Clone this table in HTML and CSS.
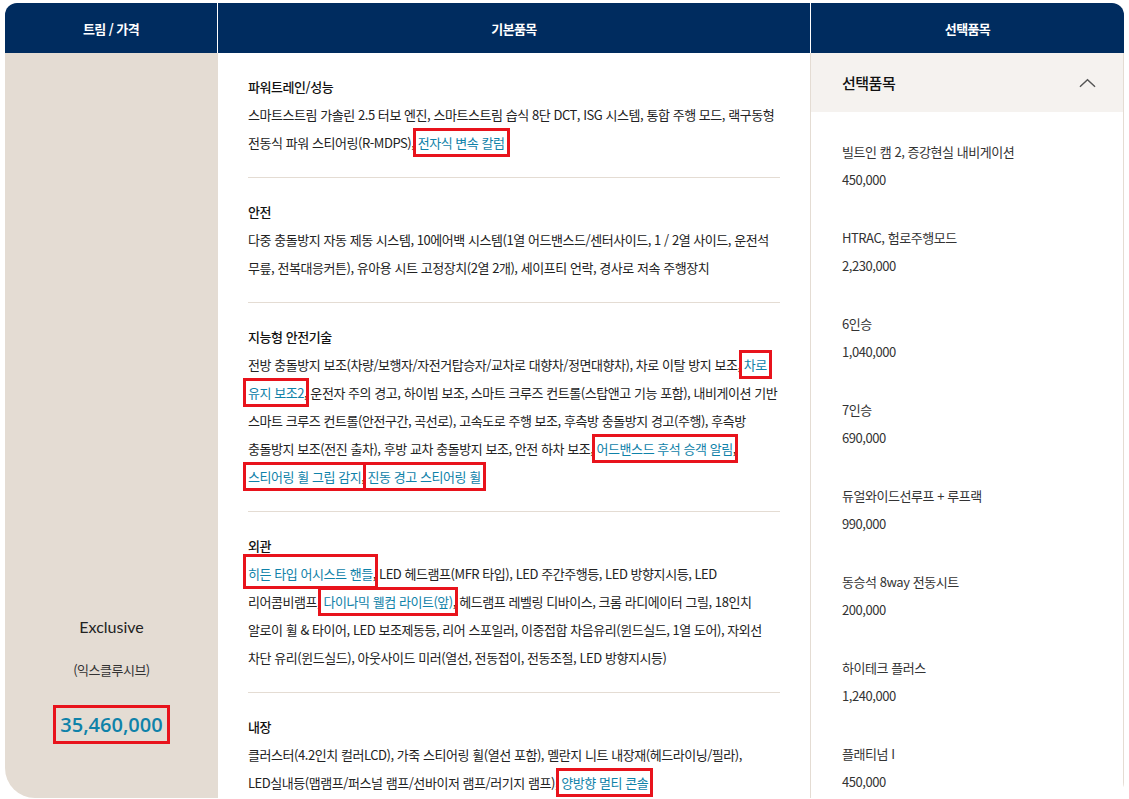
FILE: index.html
```html
<!DOCTYPE html>
<html lang="ko">
<head>
  <meta charset="UTF-8" />
  <meta name="viewport" content="width=device-width, initial-scale=1.0"/>
  <title>트림 / 가격</title>

  <link rel="stylesheet" href="styles.css">
</head>
<body>
  <div class="spec">
    <div class="spec-head">
      <div class="head-cell">트림 / 가격</div>
      <div class="head-cell">기본품목</div>
      <div class="head-cell">선택품목</div>
    </div>

    <div class="spec-body">
      <div class="trim">
        <p class="trim-name">Exclusive</p>
        <p class="trim-sub">(익스클루시브)</p>
        <p class="trim-price"><span class="mark">35,460,000</span></p>
      </div>

      <div class="basic">
        <section class="group">
          <h3 class="group-title">파워트레인/성능</h3>
          <p class="group-text">스마트스트림 가솔린 2.5 터보 엔진, 스마트스트림 습식 8단 DCT, ISG 시스템, 통합 주행 모드, 랙구동형 전동식 파워 스티어링(R-MDPS), <span class="link mark">전자식 변속 칼럼</span></p>
        </section>
        <section class="group">
          <h3 class="group-title">안전</h3>
          <p class="group-text">다중 충돌방지 자동 제동 시스템, 10에어백 시스템(1열 어드밴스드/센터사이드, 1 / 2열 사이드, 운전석 무릎, 전복대응커튼), 유아용 시트 고정장치(2열 2개), 세이프티 언락, 경사로 저속 주행장치</p>
        </section>
        <section class="group">
          <h3 class="group-title">지능형 안전기술</h3>
          <p class="group-text">전방 충돌방지 보조(차량/보행자/자전거탑승자/교차로 대향차/정면대향차), 차로 이탈 방지 보조, <span class="link mark">차로</span> <span class="link mark">유지 보조2</span>, 운전자 주의 경고, 하이빔 보조, 스마트 크루즈 컨트롤(스탑앤고 기능 포함), 내비게이션 기반 스마트 크루즈 컨트롤(안전구간, 곡선로), 고속도로 주행 보조, 후측방 충돌방지 경고(주행), 후측방 충돌방지 보조(전진 출차), 후방 교차 충돌방지 보조, 안전 하차 보조, <span class="link mark">어드밴스드 후석 승객 알림</span>, <span class="link mark">스티어링 휠 그립 감지</span>, <span class="link mark">진동 경고 스티어링 휠</span></p>
        </section>
        <section class="group">
          <h3 class="group-title">외관</h3>
          <p class="group-text"><span class="link mark mark-tall">히든 타입 어시스트 핸들</span>, LED 헤드램프(MFR 타입), LED 주간주행등, LED 방향지시등, LED 리어콤비램프, <span class="link mark">다이나믹 웰컴 라이트(앞)</span>, 헤드램프 레벨링 디바이스, 크롬 라디에이터 그릴, 18인치 알로이 휠 &amp; 타이어, LED 보조제동등, 리어 스포일러, 이중접합 차음유리(윈드실드, 1열 도어), 자외선 차단 유리(윈드실드), 아웃사이드 미러(열선, 전동접이, 전동조절, LED 방향지시등)</p>
        </section>
        <section class="group">
          <h3 class="group-title">내장</h3>
          <p class="group-text">클러스터(4.2인치 컬러LCD), 가죽 스티어링 휠(열선 포함), 멜란지 니트 내장재(헤드라이닝/필라), LED실내등(맵램프/퍼스널 램프/선바이저 램프/러기지 램프), <span class="link mark">양방향 멀티 콘솔</span></p>
        </section>
      </div>

      <div class="options">
        <div class="options-head">
          <span>선택품목</span>
          <svg class="chevron" width="18" height="10" viewBox="0 0 18 10">
            <path d="M1 9 L9 1.5 L17 9" fill="none" stroke="#555" stroke-width="1.5"/>
          </svg>
        </div>
        <ul class="option-list">
          <li class="option">
            <p>빌트인 캠 2, 증강현실 내비게이션</p>
            <p>450,000</p>
          </li>
          <li class="option">
            <p>HTRAC, 험로주행모드</p>
            <p>2,230,000</p>
          </li>
          <li class="option">
            <p>6인승</p>
            <p>1,040,000</p>
          </li>
          <li class="option">
            <p>7인승</p>
            <p>690,000</p>
          </li>
          <li class="option">
            <p>듀얼와이드선루프 + 루프랙</p>
            <p>990,000</p>
          </li>
          <li class="option">
            <p>동승석 8way 전동시트</p>
            <p>200,000</p>
          </li>
          <li class="option">
            <p>하이테크 플러스</p>
            <p>1,240,000</p>
          </li>
          <li class="option">
            <p>플래티넘 I</p>
            <p>450,000</p>
          </li>
        </ul>
      </div>
    </div>
  </div>
</body>
</html>
```

FILE: styles.css
```css
* {
  box-sizing: border-box;
  margin: 0;
  padding: 0;
}

body {
  background-color: #fff;
  font-family: 'Noto Sans CJK KR', 'Noto Sans', sans-serif;
  color: #222;
  word-break: keep-all;
}

.spec {
  margin: 3px 5px 0 5px;
  height: 795px;
  overflow: hidden;
  border-radius: 12px 12px 16px 30px;
}

.spec-head {
  display: grid;
  grid-template-columns: 213px 593px 1fr;
  height: 50px;
  background-color: #002c5f;
}

.head-cell {
  display: flex;
  align-items: center;
  justify-content: center;
  color: #fff;
  font-size: 13px;
  font-weight: 700;
  letter-spacing: -0.6px;
}

.head-cell:not(:last-child) {
  border-right: 1px solid #fff;
}

.spec-body {
  display: grid;
  grid-template-columns: 213px 593px 1fr;
}

/* trim */
.trim {
  background-color: #e4dcd3;
  display: flex;
  flex-direction: column;
  align-items: center;
  padding-top: 562px;
}

.trim-name {
  font-family: Lato, 'Noto Sans CJK KR', sans-serif;
  font-size: 16px;
  line-height: 24px;
  color: #222;
}

.trim-sub {
  margin-top: 19px;
  font-size: 13px;
  line-height: 24px;
  letter-spacing: -0.5px;
  color: #333;
}

.trim-price {
  margin-top: 28px;
  font-family: 'Open Sans', 'Noto Sans', sans-serif;
  font-size: 20px;
  font-weight: 600;
  line-height: 30px;
  color: #0f82a9;
}

/* basic items */
.basic {
  padding: 0 30px;
  border-right: 1px solid #e4dcd3;
}

.group {
  padding: 20px 0;
  border-bottom: 1px solid #e4dcd3;
}

.group:last-child {
  border-bottom: none;
}

.group-title,
.group-text {
  font-size: 13px;
  line-height: 28px;
  letter-spacing: -0.45px;
}

.group-title {
  font-weight: 500;
  color: #111;
}

.group-text {
  color: #222;
}

.link {
  color: #0f82a9;
}

.mark {
  outline: 3px solid #e8131c;
  outline-offset: 2px;
}

.mark-tall {
  padding: 5px 0 1px;
}

.trim-price .mark {
  outline-offset: 3px;
  padding: 0 1px;
}

/* options */
.options {
  border-right: 1px solid #e4dcd3;
}

.options-head {
  display: flex;
  align-items: center;
  justify-content: space-between;
  height: 59px;
  padding: 0 27px 0 31px;
  background-color: #f5f2ef;
  font-size: 15px;
  font-weight: 500;
  letter-spacing: -0.5px;
  color: #111;
}

.chevron {
  width: 17px;
  height: 10px;
}

.option-list {
  list-style: none;
  padding: 26px 31px;
}

.option {
  margin-bottom: 30px;
  font-size: 13px;
  line-height: 28px;
  letter-spacing: -0.45px;
  color: #333;
}
```
